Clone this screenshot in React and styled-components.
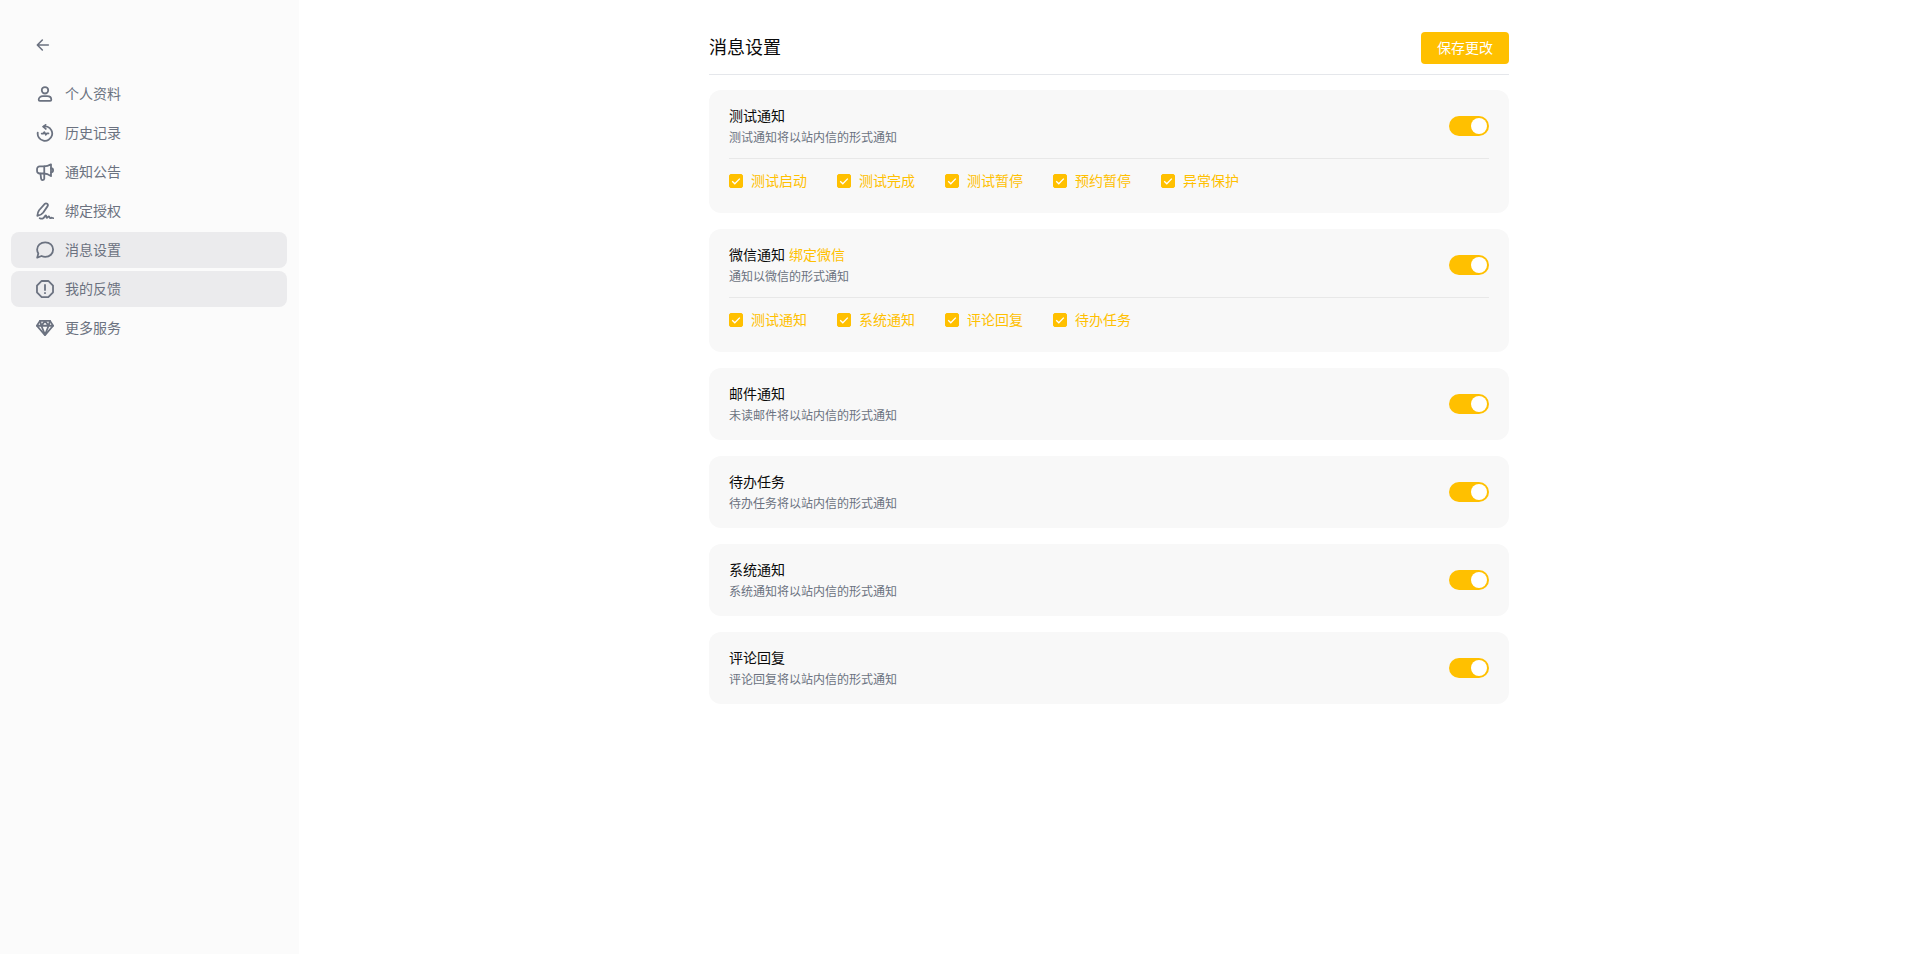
import React from "react";
import styled, { createGlobalStyle } from "styled-components";

const GlobalStyle = createGlobalStyle`
  * {
    box-sizing: border-box;
  }
  body {
    margin: 0;
    background: #ffffff;
    color: #0a0a0a;
    font-family: "Liberation Sans", "Noto Sans CJK SC", sans-serif;
    font-size: 14px;
  }
`;

const Page = styled.div`
  display: flex;
  min-height: 100vh;
`;

const Sidebar = styled.aside`
  width: 299px;
  flex-shrink: 0;
  padding: 34px 12px 20px 11px;
  background: #fbfbfb;
`;

const BackButton = styled.button`
  display: flex;
  align-items: center;
  height: 22px;
  margin: 0 0 20px 24px;
  padding: 0;
  border: none;
  background: none;
  color: #6b7280;
  cursor: pointer;
`;

const Menu = styled.nav`
  display: flex;
  flex-direction: column;
  gap: 3px;
`;

const MenuLink = styled.a`
  display: flex;
  align-items: center;
  gap: 11px;
  height: 36px;
  padding: 0 25px;
  border-radius: 8px;
  background: ${({ $active }) => ($active ? "#ebebed" : "transparent")};
  color: #6b7280;
  line-height: 20px;
  text-decoration: none;
`;

const Main = styled.main`
  flex: 1;
  padding: 32px 20px;
`;

const Content = styled.div`
  max-width: 800px;
  margin: 0 auto;
`;

const Header = styled.header`
  display: flex;
  align-items: center;
  justify-content: space-between;
  padding-bottom: 10px;
  border-bottom: 1px solid #e5e7eb;
`;

const Title = styled.h1`
  margin: 0;
  font-size: 18px;
  font-weight: 400;
  line-height: 28px;
`;

const SaveButton = styled.button`
  height: 32px;
  padding: 0 16px;
  border: none;
  border-radius: 4px;
  background: #ffc000;
  color: #ffffff;
  font: inherit;
  line-height: 20px;
  cursor: pointer;
`;

const Cards = styled.div`
  display: flex;
  flex-direction: column;
  gap: 16px;
  padding-top: 15px;
`;

const Card = styled.section`
  padding: 16px 20px;
  border-radius: 12px;
  background: #f8f8f8;
`;

const CardHead = styled.div`
  display: flex;
  align-items: center;
  justify-content: space-between;
`;

const CardTitle = styled.h2`
  margin: 0 0 4px;
  font-size: 14px;
  font-weight: 400;
  line-height: 20px;
`;

const BindLink = styled.a`
  color: #ffc000;
  text-decoration: none;
`;

const CardText = styled.p`
  margin: 0;
  color: #6b7280;
  font-size: 12px;
  line-height: 16px;
`;

const Switch = styled.input`
  appearance: none;
  display: flex;
  align-items: center;
  width: 40px;
  height: 20px;
  margin: 0;
  padding: 0 2px;
  border-radius: 10px;
  background: #dcdfe6;
  cursor: pointer;

  &::before {
    content: "";
    width: 16px;
    height: 16px;
    border-radius: 50%;
    background: #ffffff;
  }

  &:checked {
    justify-content: flex-end;
    background: #ffc000;
  }
`;

const Options = styled.div`
  display: flex;
  flex-wrap: wrap;
  gap: 0 30px;
  margin-top: 12px;
  padding-top: 6px;
  border-top: 1px solid #e8e8e8;
`;

const Option = styled.label`
  display: flex;
  align-items: center;
  gap: 8px;
  height: 32px;
  color: #ffc000;
  line-height: 20px;
  cursor: pointer;
`;

const CheckSlot = styled.span`
  display: grid;
  width: 14px;
  height: 14px;

  > * {
    grid-area: 1 / 1;
  }

  svg {
    pointer-events: none;
  }
`;

const Checkbox = styled.input`
  appearance: none;
  width: 14px;
  height: 14px;
  margin: 0;
  border: 1px solid #dcdfe6;
  border-radius: 2px;
  background: #ffffff;

  &:checked {
    border-color: #ffc000;
    background: #ffc000;
  }
`;

const StrokeIcon = styled.svg`
  flex-shrink: 0;
  fill: none;
  stroke: currentColor;
  stroke-linecap: round;
  stroke-linejoin: round;
`;

const Icon = ({ children, size = 18 }) => (
  <StrokeIcon width={size} height={size} viewBox="0 0 24 24" strokeWidth="2.4" aria-hidden="true">
    {children}
  </StrokeIcon>
);

const UserIcon = () => (
  <Icon>
    <circle cx="12" cy="7" r="4.300" />
    <path d="M3.600 19.600c0-3 2.600-4.700 5.400-4.700h6c2.800 0 5.400 1.700 5.400 4.700 0 1-.6 1.500-1.500 1.500H5.100c-.9 0-1.500-.5-1.500-1.500z" />
  </Icon>
);

const HistoryIcon = () => (
  <Icon>
    <path d="M2.300 11.500a9.700 9.700 0 1 0 13-7.800c-1.600-.6-3.500-.7-5.300-.3" />
    <path d="M12.800 1.200 9.600 3.600l3.400 3" />
    <path d="M7.600 12.800h2l1.600-2 1.900 3.500 1.500-1.700h2" />
  </Icon>
);

const MegaphoneIcon = () => (
  <Icon>
    <path d="M10.500 4.500H5A3.500 3.500 0 0 0 1.400 8v2.500A3.500 3.500 0 0 0 5 14h5.500c3.500 0 6.400 1.300 9.500 3.500V1.800c-3 1.700-6 2.700-9.500 2.700z" />
    <path d="M11 4.500V14M20 7c2 0 2.800 1.200 2.800 2.700s-.8 2.700-2.800 2.700" />
    <path d="m6 14.300.8 6.400c.3 2.900 4.300 2.700 4.200-.2V14.300" />
  </Icon>
);

const SignIcon = () => (
  <Icon>
    <path d="M1.800 18.500c.2-3.200.8-5.500 2.300-7.500l7.600-8.400c2-2 5.200.4 3.800 2.900L9.700 14c-1.800 2.500-4.500 3.800-7.900 4.500z" />
    <path d="M5 21.600c2.700 1.400 5.200.6 6.700-2.400.9-1.900 2-1.800 2 .2 0 2.200.9 2.300 2.200.5 1-1.300 1.800-1 2 .2.3 1.500 1.500 2 2.600.9.800-.7 1.400.8 2.400.6" />
  </Icon>
);

const MessageIcon = () => (
  <Icon>
    <path d="M12.300 1.700C18.500 1.700 22.800 5.900 22.800 11.400s-4.300 9.700-10.500 9.700c-1.800 0-3.400-.4-4.900-1.100L1.600 22.200l1.500-5.400C2.100 15.200 1.500 13.400 1.500 11.400c0-5.500 4.600-9.700 10.800-9.700z" />
  </Icon>
);

const FeedbackIcon = () => (
  <Icon>
    <path d="M7.600 1.300h8.800l6.300 6.300v8.800l-6.300 6.300H7.600l-6.300-6.300V7.600z" />
    <path d="M12 6.500v6.800M12 17.300v.2" />
  </Icon>
);

const DiamondIcon = () => (
  <Icon>
    <path d="M5.300 2.500h13.400l4.100 6.500L12 21.500 1.200 9z" />
    <path d="M1.500 9h21M12 2.500 7.200 9 12 21l4.800-12zM5.300 2.500 7.200 9M18.700 2.500 16.800 9" />
  </Icon>
);

const menu = [
  { label: "个人资料", icon: <UserIcon /> },
  { label: "历史记录", icon: <HistoryIcon /> },
  { label: "通知公告", icon: <MegaphoneIcon /> },
  { label: "绑定授权", icon: <SignIcon /> },
  { label: "消息设置", icon: <MessageIcon />, active: true },
  { label: "我的反馈", icon: <FeedbackIcon />, active: true },
  { label: "更多服务", icon: <DiamondIcon /> },
];

const settings = [
  {
    title: "测试通知",
    text: "测试通知将以站内信的形式通知",
    options: ["测试启动", "测试完成", "测试暂停", "预约暂停", "异常保护"],
  },
  {
    title: "微信通知",
    link: "绑定微信",
    text: "通知以微信的形式通知",
    options: ["测试通知", "系统通知", "评论回复", "待办任务"],
  },
  { title: "邮件通知", text: "未读邮件将以站内信的形式通知" },
  { title: "待办任务", text: "待办任务将以站内信的形式通知" },
  { title: "系统通知", text: "系统通知将以站内信的形式通知" },
  { title: "评论回复", text: "评论回复将以站内信的形式通知" },
];

const CheckOption = ({ label }) => (
  <Option>
    <CheckSlot>
      <Checkbox type="checkbox" defaultChecked />
      <svg width="14" height="14" viewBox="0 0 14 14" fill="none" stroke="#ffffff" strokeWidth="1.3">
        <path d="m3.200 7.200 2.600 2.600 5-5.200" />
      </svg>
    </CheckSlot>
    {label}
  </Option>
);

const SettingCard = ({ title, link, text, options }) => (
  <Card>
    <CardHead>
      <div>
        <CardTitle>
          {title} {link && <BindLink href="#bind">{link}</BindLink>}
        </CardTitle>
        <CardText>{text}</CardText>
      </div>
      <Switch type="checkbox" role="switch" aria-label={title} defaultChecked />
    </CardHead>
    {options && (
      <Options>
        {options.map((label) => (
          <CheckOption key={label} label={label} />
        ))}
      </Options>
    )}
  </Card>
);

const App = () => {
  return (
    <Page>
      <GlobalStyle />
      <Sidebar>
        <BackButton type="button" aria-label="返回">
          <Icon size={16}>
            <path d="M20 12H4M11 4.500 3.500 12l7.500 7.500" />
          </Icon>
        </BackButton>
        <Menu>
          {menu.map(({ label, icon, active }) => (
            <MenuLink key={label} href="#" $active={active}>
              {icon}
              {label}
            </MenuLink>
          ))}
        </Menu>
      </Sidebar>
      <Main>
        <Content>
          <Header>
            <Title>消息设置</Title>
            <SaveButton type="button">保存更改</SaveButton>
          </Header>
          <Cards>
            {settings.map((item) => (
              <SettingCard key={item.title} {...item} />
            ))}
          </Cards>
        </Content>
      </Main>
    </Page>
  );
};

export default App;
